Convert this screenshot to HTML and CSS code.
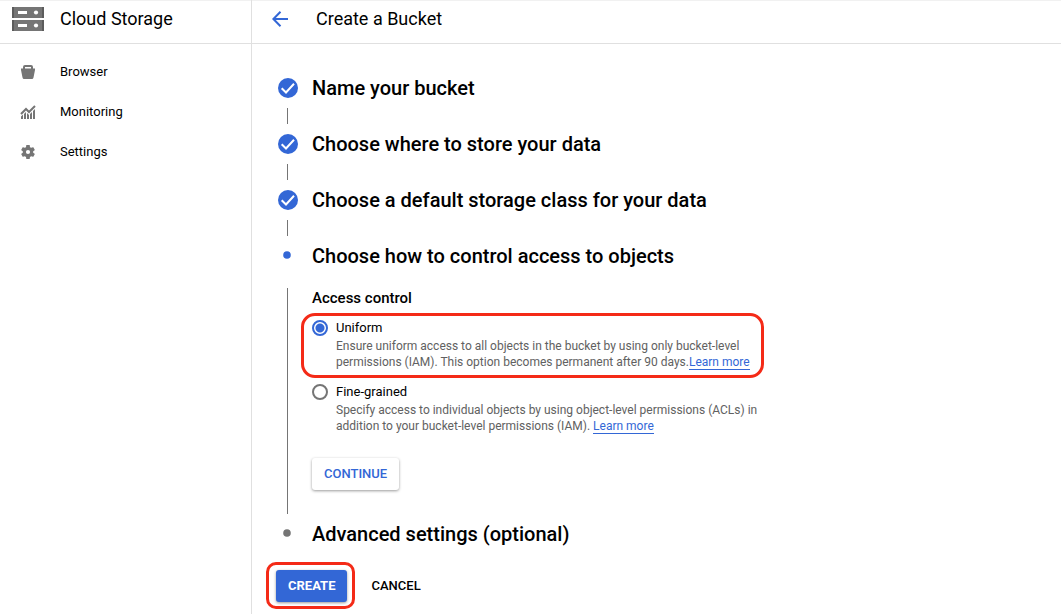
FILE: index.html
```html
<!DOCTYPE html>
<html lang="en">
<head>
    <meta charset="UTF-8">
    <meta name="viewport" content="width=device-width, initial-scale=1.0">
    <title>Create a Bucket - Cloud Storage</title>
    <link rel="stylesheet" href="styles.css">
</head>
<body>
    <aside class="sidebar">
        <div class="bar sidebar-bar">
            <svg class="logo" width="32" height="24" viewBox="0 0 32 24" aria-hidden="true">
                <path fill="#757575" d="M0 0h32v11H0zM0 13h32v11H0z"/>
                <path fill="#5c5c5c" d="M0 0h2v11H0zM30 0h2v11h-2zM0 13h2v11H0zM30 13h2v11h-2z"/>
                <path fill="#fff" d="M6 4h9v3H6zM6 17h9v3H6z"/>
                <circle cx="24" cy="5.5" r="2.1" fill="#fff"/>
                <circle cx="24" cy="18.5" r="2.1" fill="#fff"/>
            </svg>
            <span class="bar-title">Cloud Storage</span>
        </div>
        <nav class="nav">
            <a class="nav-item" href="#browser">
                <svg width="16" height="16" viewBox="0 0 16 16" aria-hidden="true">
                    <path fill="#757575" fill-rule="evenodd" d="M3 4.500V3Q3 1 5 1h6q2 0 2 2v1.500h2V6l-1.500 7.500Q13.200 15 12 15H4q-1.200 0-1.500-1.500L1 6V4.500zM5 4.500h6V3H5z"/>
                </svg>
                Browser
            </a>
            <a class="nav-item" href="#monitoring">
                <svg width="16" height="16" viewBox="0 0 16 16" aria-hidden="true">
                    <path fill="none" stroke="#757575" stroke-width="2" d="M1 10 6 5l3 3 6-6"/>
                    <path fill="#757575" d="M1 12.500l2-2V15H1zM4 10l2-2v7H4zM7 9l2 2v4H7zM10 10l2-2v7h-2zM13 7l2-2v10h-2z"/>
                </svg>
                Monitoring
            </a>
            <a class="nav-item" href="#settings">
                <svg width="16" height="16" viewBox="0.500 0.500 23 23" aria-hidden="true">
                    <path fill="#757575" d="M19.430 12.980c.04-.32.070-.64.070-.98s-.03-.66-.07-.98l2.110-1.650c.19-.15.240-.42.120-.64l-2-3.460c-.12-.22-.39-.3-.61-.22l-2.490 1c-.52-.4-1.080-.73-1.690-.98l-.38-2.650C14.460 2.180 14.250 2 14 2h-4c-.25 0-.46.180-.49.420l-.38 2.650c-.61.250-1.170.59-1.690.98l-2.490-1c-.23-.09-.49 0-.61.220l-2 3.460c-.13.220-.07.490.12.640l2.110 1.650c-.04.320-.07.650-.07.980s.030.660.070.980l-2.110 1.650c-.19.150-.24.420-.12.640l2 3.460c.12.220.39.300.61.220l2.490-1c.52.400 1.080.730 1.690.980l.38 2.650c.03.240.24.420.49.420h4c.25 0 .46-.18.490-.42l.38-2.650c.61-.25 1.170-.59 1.690-.98l2.490 1c.23.090.49 0 .61-.22l2-3.460c.12-.22.070-.49-.12-.64zM12 15a3 3 0 1 1 0-6 3 3 0 0 1 0 6z"/>
                </svg>
                Settings
            </a>
        </nav>
    </aside>

    <div class="page">
        <header class="bar page-bar">
            <a class="back" href="#back" aria-label="Back">
                <svg width="16" height="16" viewBox="0 0 16 16" aria-hidden="true">
                    <path fill="none" stroke="#3367d6" stroke-width="2" d="M16 8H1.500M8.500.8 1.400 8l7.100 7.200"/>
                </svg>
            </a>
            <h1 class="bar-title">Create a Bucket</h1>
        </header>

        <main>
            <form class="form">
                <section class="step">
                    <div class="step-head">
                        <svg class="marker" width="20" height="20" viewBox="0 0 20 20" aria-hidden="true">
                            <circle cx="10" cy="10" r="10" fill="#3367d6"/>
                            <path fill="none" stroke="#fff" stroke-width="2" d="M3.700 10.200 8 14.500l8-8.700"/>
                        </svg>
                        <h2>Name your bucket</h2>
                    </div>
                    <div class="connector"></div>
                </section>
                <section class="step">
                    <div class="step-head">
                        <svg class="marker" width="20" height="20" viewBox="0 0 20 20" aria-hidden="true">
                            <circle cx="10" cy="10" r="10" fill="#3367d6"/>
                            <path fill="none" stroke="#fff" stroke-width="2" d="M3.700 10.200 8 14.500l8-8.700"/>
                        </svg>
                        <h2>Choose where to store your data</h2>
                    </div>
                    <div class="connector"></div>
                </section>
                <section class="step">
                    <div class="step-head">
                        <svg class="marker" width="20" height="20" viewBox="0 0 20 20" aria-hidden="true">
                            <circle cx="10" cy="10" r="10" fill="#3367d6"/>
                            <path fill="none" stroke="#fff" stroke-width="2" d="M3.700 10.200 8 14.500l8-8.700"/>
                        </svg>
                        <h2>Choose a default storage class for your data</h2>
                    </div>
                    <div class="connector"></div>
                </section>
                <section class="step">
                    <div class="step-head">
                        <svg class="marker" width="20" height="20" viewBox="0 0 20 20" aria-hidden="true">
                            <circle cx="9" cy="9" r="3.800" fill="#3367d6"/>
                        </svg>
                        <h2>Choose how to control access to objects</h2>
                    </div>
                    <div class="step-body">
                        <h3>Access control</h3>
                        <div class="option highlight">
                            <input type="radio" name="access" id="uniform" checked>
                            <div>
                                <label for="uniform">Uniform</label>
                                <p>Ensure uniform access to all objects in the bucket by using only bucket-level permissions (IAM). This option becomes permanent after 90 days.<a href="#uniform-help">Learn more</a></p>
                            </div>
                        </div>
                        <div class="option">
                            <input type="radio" name="access" id="fine">
                            <div>
                                <label for="fine">Fine-grained</label>
                                <p>Specify access to individual objects by using object-level permissions (ACLs) in addition to your bucket-level permissions (IAM). <a href="#fine-help">Learn more</a></p>
                            </div>
                        </div>
                        <button type="button" class="btn btn-raised">CONTINUE</button>
                    </div>
                </section>
                <section class="step">
                    <div class="step-head">
                        <svg class="marker" width="20" height="20" viewBox="0 0 20 20" aria-hidden="true">
                            <circle cx="9" cy="9" r="3.800" fill="#757575"/>
                        </svg>
                        <h2>Advanced settings (optional)</h2>
                    </div>
                </section>
                <div class="actions">
                    <div class="highlight highlight-button">
                        <button type="submit" class="btn btn-primary">CREATE</button>
                    </div>
                    <button type="button" class="btn">CANCEL</button>
                </div>
            </form>
        </main>
    </div>
</body>
</html>
```
FILE: styles.css
```css
* {
    box-sizing: border-box;
}
body {
    margin: 0;
    min-height: 100vh;
    display: flex;
    background: #fff;
    color: #000;
    font-family: Roboto, "Liberation Sans", sans-serif;
    font-size: 13px;
    line-height: 16px;
}
h1, h2, h3, p {
    margin: 0;
}
svg {
    display: block;
    flex: none;
}

/* top bars */
.bar {
    height: 44px;
    display: flex;
    align-items: center;
    padding-bottom: 6px;
    border-top: 1px solid #f1f1f1;
    border-bottom: 1px solid #e0e0e0;
}
.sidebar-bar {
    gap: 16px;
    padding-left: 12px;
}
.page-bar {
    gap: 28px;
    padding-left: 20px;
}
.bar-title {
    font-size: 18px;
    font-weight: 400;
    line-height: 24px;
}

/* sidebar */
.sidebar {
    flex: none;
    width: 252px;
    border-right: 1px solid #e0e0e0;
}
.nav {
    padding-top: 8px;
}
.nav-item {
    display: flex;
    align-items: center;
    gap: 24px;
    height: 40px;
    padding-left: 20px;
    color: #000;
    text-decoration: none;
}

/* stepper */
.page {
    flex: 1;
    min-width: 0;
}
.form {
    padding: 24px 24px 0;
}
.step {
    padding-left: 2px;
}
.step-head {
    display: flex;
    align-items: center;
    gap: 14px;
    height: 40px;
}
.step-head h2 {
    font-size: 20px;
    font-weight: 500;
    line-height: 24px;
}
.connector {
    width: 1px;
    height: 16px;
    margin-left: 9px;
    background: #757575;
}
.step-body {
    max-width: 482px;
    margin: 12px 0 0 9px;
    padding: 0 8px 24px 24px;
    border-left: 1px solid #757575;
}
.step-body h3 {
    margin-bottom: 12px;
    font-size: 15px;
    font-weight: 500;
    line-height: 20px;
}
.option {
    display: flex;
    gap: 8px;
    margin-bottom: 14px;
}
.option input {
    appearance: none;
    flex: none;
    width: 16px;
    height: 16px;
    margin: 0;
    border: 2px solid #757575;
    border-radius: 50%;
}
.option input:checked {
    border-color: #3367d6;
    background: radial-gradient(circle, #3367d6 4px, #fff 5px);
}
.option label {
    display: block;
}
.option p {
    margin-top: 2px;
    color: #616161;
    font-size: 12px;
}
.option a {
    color: #3367d6;
    text-decoration: none;
    border-bottom: 1px solid #3367d6;
}

/* red frames around the controls to use */
.highlight {
    position: relative;
}
.highlight::after {
    content: "";
    position: absolute;
    inset: -7px -3px -8px -11px;
    border: 3px solid #f42a17;
    border-radius: 14px;
    pointer-events: none;
}
.highlight-button::after {
    inset: -8px -8px -7px -10px;
    border-radius: 10px;
}

/* buttons */
.btn {
    height: 32px;
    padding: 0 12px 2px;
    border: 0;
    border-radius: 3px;
    background: none;
    color: #000;
    font-family: inherit;
    font-size: 13px;
    font-weight: 500;
    cursor: pointer;
}
.btn-raised {
    margin-top: 10px;
    background: #fff;
    color: #3367d6;
    box-shadow: 0 1px 3px rgba(0, 0, 0, 0.4);
}
.btn-primary {
    background: #3367d6;
    color: #fff;
    font-weight: 700;
    box-shadow: 0 1px 3px rgba(0, 0, 0, 0.4);
}
.actions {
    display: flex;
    gap: 12px;
    padding: 16px 0 12px;
}
```
